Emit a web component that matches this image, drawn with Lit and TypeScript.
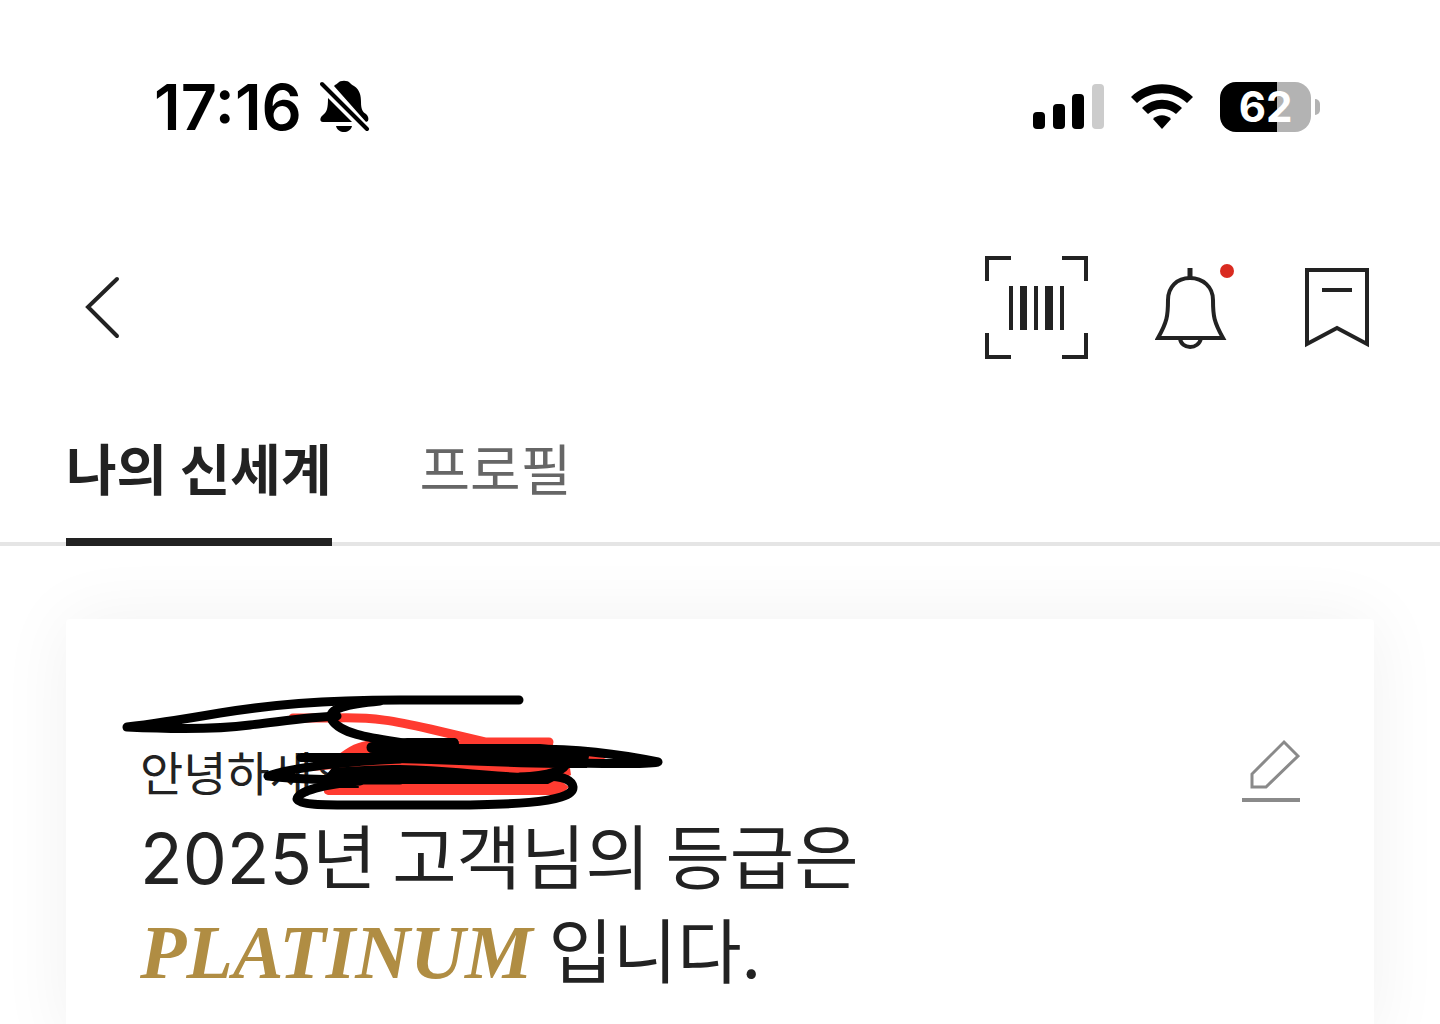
import { LitElement, html, svg, css } from "lit";
import { customElement, state } from "lit/decorators.js";

const SIGNAL_BARS = [
  { x: 0, y: 28, on: true },
  { x: 20, y: 20, on: true },
  { x: 39, y: 10, on: true },
  { x: 59, y: 0, on: false },
];

@customElement("status-bar")
class StatusBar extends LitElement {
  static styles = css`
    :host {
      display: flex;
      align-items: center;
      justify-content: space-between;
      padding: 71px 120px 0 154px;
      height: 72px;
      color: #000;
      font-family: Inter, "Liberation Sans", sans-serif;
    }
    .left {
      display: flex;
      align-items: center;
      gap: 18px;
    }
    .right {
      display: flex;
      align-items: center;
      gap: 27px;
    }
    svg {
      display: block;
    }
    .time {
      font-size: 63px;
      line-height: 72px;
      font-weight: 600;
    }
    .battery {
      display: flex;
      align-items: center;
      gap: 4px;
    }
    .level {
      width: 91px;
      height: 50px;
      border-radius: 16px;
      background: linear-gradient(90deg, #000 0 57px, #b3b3b3 57px);
      color: #fff;
      font-size: 42px;
      line-height: 50px;
      font-weight: 700;
      text-align: center;
    }
    .nub {
      width: 5px;
      height: 16px;
      border-radius: 0 8px 8px 0;
      background: #b3b3b3;
    }
  `;

  render() {
    return html`
      <div class="left">
        <span class="time">17:16</span>
        <svg width="50" height="54" viewBox="0 0 50 54" aria-hidden="true">
          <path d="M14 6 C16 4 17 4 18 3 C20 0 28 0 30 3 C31 4 32 5 34 6 C40 10 41 16 41 22 C41 30 43 32 46 34 C48 36 49 38 48 41 L46 42 Z" />
          <path d="M8 18 L32 42 L3 42 C-1 42 0 37 3 35 C7 32 8 28 8 18 Z" />
          <path d="M16 46 H32 C30 54 18 54 16 46 Z" />
          <path d="M3 5 L47 49" stroke="#fff" stroke-width="8" />
          <path d="M2 4 L47 49" stroke="#000" stroke-width="4" stroke-linecap="round" />
        </svg>
      </div>
      <div class="right">
        <svg width="71" height="46" viewBox="0 0 71 46" aria-hidden="true">
          ${SIGNAL_BARS.map(
            (b) => svg`<rect x=${b.x} y=${b.y} width="12" height=${45 - b.y} rx="4" fill=${b.on ? "#000" : "#ccc"} />`
          )}
        </svg>
        <svg width="62" height="46" viewBox="0 0 62 46" aria-hidden="true">
          <path d="M0 13 C17 -4 45 -4 62 13 L56 19 C42 6 20 6 6 19 Z" />
          <path d="M11 24 C23 13 39 13 51 24 L45 30 C37 23 25 23 17 30 Z" />
          <path d="M22 35 C27 30 35 30 40 35 L31 45 Z" />
        </svg>
        <div class="battery">
          <div class="level">62</div>
          <div class="nub"></div>
        </div>
      </div>
    `;
  }
}

@customElement("nav-bar")
class NavBar extends LitElement {
  static styles = css`
    :host {
      display: flex;
      align-items: center;
      justify-content: space-between;
      padding: 112px 70px 0 84px;
    }
    .actions {
      display: flex;
      align-items: center;
      gap: 67px;
    }
    button {
      display: block;
      padding: 0;
      border: 0;
      background: none;
      cursor: pointer;
    }
    svg {
      display: block;
      fill: none;
      stroke: #222;
      stroke-width: 4;
    }
    .heavy {
      stroke-width: 5;
    }
    .solid {
      fill: #222;
      stroke: none;
    }
    .dot {
      fill: #d92b20;
      stroke: none;
    }
  `;

  render() {
    return html`
      <button aria-label="뒤로">
        <svg width="36" height="64" viewBox="0 0 36 64">
          <path d="M33 4 L4 32 L33 61" stroke-linecap="round" />
        </svg>
      </button>
      <div class="actions">
        <button aria-label="바코드">
          <svg width="104" height="104" viewBox="0 0 104 104">
            <path d="M3 26 V3 H27 M78 3 H102 V26 M102 78 V102 H78 M27 102 H3 V78" />
            <path class="solid" d="M25 31 h4 v44 h-4 Z M36 31 h7 v44 h-7 Z M50 31 h4 v44 h-4 Z M61 31 h8 v44 h-8 Z M76 31 h4 v44 h-4 Z" />
          </svg>
        </button>
        <button aria-label="알림">
          <svg width="82" height="88" viewBox="0 0 82 88">
            <path class="heavy" d="M35 5 V15" />
            <path d="M13 37 C13 24 22 15 35 15 C48 15 58 24 58 37 C58 53 59 59 68 75 H3 C12 59 13 53 13 37 Z" />
            <path d="M25 75 C26 87 44 87 46 75" />
            <circle class="dot" cx="72" cy="8" r="7" />
          </svg>
        </button>
        <button aria-label="북마크">
          <svg width="66" height="82" viewBox="0 0 66 82">
            <path d="M3 4 H63 V78 L33 62 L3 78 Z" />
            <path d="M18 24 H48" />
          </svg>
        </button>
      </div>
    `;
  }
}

@customElement("grade-card")
class GradeCard extends LitElement {
  static styles = css`
    :host {
      display: flex;
      align-items: flex-start;
      justify-content: space-between;
      position: relative;
      box-sizing: border-box;
      padding: 116px 74px 48px;
      border-radius: 4px;
      background: #fff;
      box-shadow: 0 0 72px rgba(0, 0, 0, 0.06);
      color: #222;
    }
    p,
    h1 {
      margin: 0;
      font-weight: 400;
    }
    .hello {
      font-size: 47px;
      line-height: 72px;
    }
    .grade {
      font-size: 70px;
      line-height: 94px;
    }
    .year {
      font-family: Inter, sans-serif;
      line-height: 72px;
    }
    .tier {
      font-family: "Liberation Serif", serif;
      font-size: 76px;
      line-height: 72px;
      font-weight: 700;
      font-style: italic;
      color: #b08d43;
    }
    .edit {
      display: block;
      margin-top: 4px;
      padding: 0;
      border: 0;
      background: none;
      cursor: pointer;
    }
    svg {
      display: block;
    }
    .scribble {
      position: absolute;
      left: 54px;
      top: 71px;
      fill: none;
      stroke-width: 9;
      stroke-linecap: round;
      stroke-linejoin: round;
      pointer-events: none;
    }
    .red {
      stroke: #ff3b30;
    }
    .black {
      stroke: #000;
    }
    .fill-red {
      fill: #ff3b30;
      stroke: none;
    }
    .fill-black {
      fill: #000;
      stroke: none;
    }
    .thin {
      stroke-width: 2;
    }
  `;

  render() {
    return html`
      <div>
        <p class="hello">안녕하세요</p>
        <h1 class="grade">
          <span class="year">2025</span>년 고객님의 등급은<br /><span class="tier">PLATINUM</span> 입니다.
        </h1>
      </div>
      <button class="edit" aria-label="수정">
        <svg width="58" height="64" viewBox="0 0 58 64" fill="none" stroke="#8a8a8a">
          <path d="M42 3 L56 17 L24 48 H10 V35 Z" stroke-width="3" />
          <path d="M0 61 H58" stroke-width="4" />
        </svg>
      </button>
      <svg class="scribble" width="550" height="124" viewBox="120 690 550 124" aria-hidden="true">
        <g class="red">
          <path d="M293 718 L335 718 C375 717 395 721 430 729 L485 742 H549" />
          <path class="fill-red" d="M330 762 C345 748 355 743 366 741 L553 740 V750 L586 754 L606 758 L602 760 H586 V766 L570 768 L571 775 L560 780 L569 787 Q562 795 555 795 H328 Q323 794 324 789 L345 782 V768 L312 771 V764 Z" />
        </g>
        <g class="black">
          <path d="M519 700 H400 C320 700 270 705 220 713 C185 719 155 724 127 727 C170 729 220 729 250 725 C285 721 310 717 337 716" />
          <path d="M380 701 C350 704 325 708 332 720 C342 736 380 739 410 744" />
          <path d="M520 749 C585 748 630 756 658 762 C640 765 610 763 560 763" />
          <path class="fill-black" d="M372 742 L407 738 H455 Q459 739 459 744 H540 L590 750 L587 768 H560 C500 767 450 764 395 763 L330 766 V762 H301 A4 4 0 0 1 301 753 H372 A5 5 0 0 1 372 742 Z" />
          <path d="M400 759 C350 761 295 767 268 776 C300 780 340 780 400 780" />
          <path class="fill-black" d="M332 768 C360 766 380 765 400 765 C450 766 490 772 525 773 L548 771 L566 775 L548 784 H332 L326 775 Z" />
          <path d="M520 777 C550 776 565 770 566 763" />
          <path d="M360 781 C325 784 298 791 297 799 C300 805 320 805 360 805 H440 C500 805 574 804 573 787 C572 780 563 776 545 776" />
          <path class="thin" d="M320 787 H358" />
        </g>
      </svg>
    `;
  }
}

@customElement("app-root")
class AppRoot extends LitElement {
  static styles = css`
    :host {
      display: block;
      min-height: 100vh;
      overflow: hidden;
      background: #fff;
      font-family: "Noto Sans CJK KR", "Noto Sans", sans-serif;
    }
    .tabs {
      display: flex;
      gap: 88px;
      margin-top: 65px;
      padding: 0 66px;
      box-shadow: inset 0 -4px #e5e5e5;
    }
    .tab {
      padding: 0 0 30px;
      border: 0;
      border-bottom: 8px solid transparent;
      background: none;
      color: #666;
      font-family: inherit;
      font-size: 55px;
      line-height: 84px;
      font-weight: 400;
      cursor: pointer;
    }
    .tab[aria-selected="true"] {
      border-color: #222;
      color: #222;
      font-weight: 700;
    }
    .content {
      padding: 73px 66px 0;
    }
  `;

  @state() private selected = 0;

  render() {
    return html`
      <status-bar></status-bar>
      <nav-bar></nav-bar>
      <div class="tabs" role="tablist">
        ${["나의 신세계", "프로필"].map(
          (label, i) => html`<button
            class="tab"
            role="tab"
            aria-selected=${i === this.selected ? "true" : "false"}
            @click=${() => (this.selected = i)}
          >${label}</button>`
        )}
      </div>
      <main class="content"><grade-card></grade-card></main>
    `;
  }
}
